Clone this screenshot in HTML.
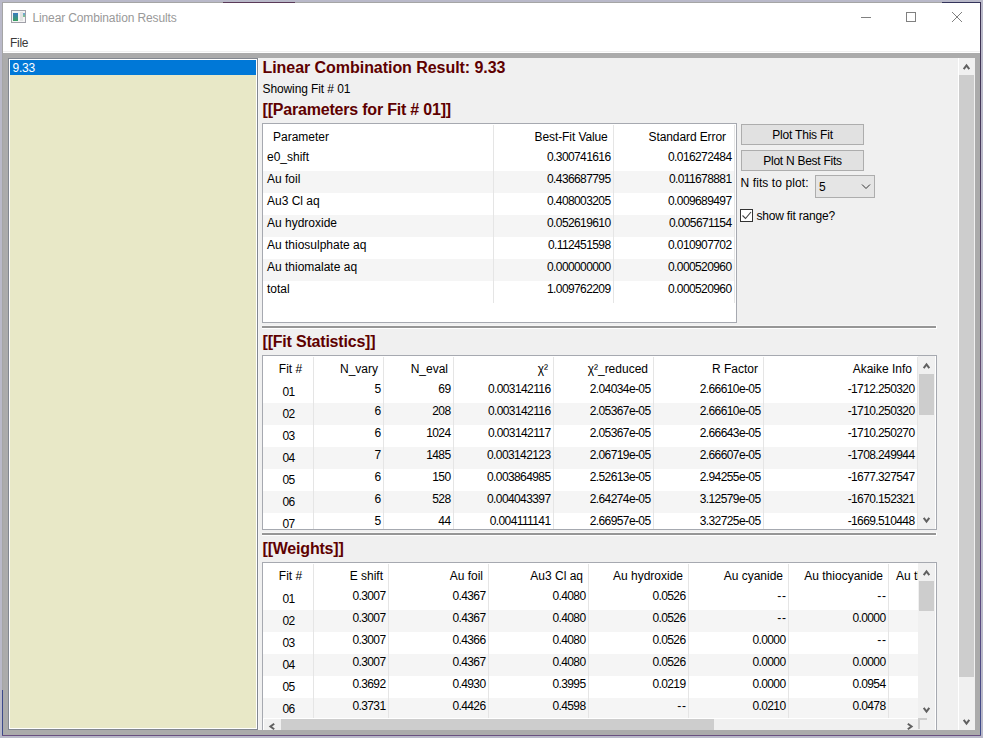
<!DOCTYPE html><html><head><meta charset="utf-8"><title>Linear Combination Results</title><style>
html,body{margin:0;padding:0}
body{width:983px;height:738px;overflow:hidden;position:relative;background:#b9b9c9;font-family:"Liberation Sans", sans-serif}
.t{position:absolute;white-space:nowrap;line-height:16px;height:16px;font-family:"Liberation Sans",sans-serif}
div{box-sizing:border-box}
svg{position:absolute}
</style></head><body>
<div style="position:absolute;left:2px;top:2px;width:979px;height:734px;background:#fff"></div>
<div style="position:absolute;left:2px;top:2px;width:978px;height:1px;background:#a5a5a5"></div>
<div style="position:absolute;left:942px;top:2px;width:39px;height:1px;background:#34345a"></div>
<div style="position:absolute;left:223px;top:2px;width:72px;height:1px;background:#5a3a58"></div>
<div style="position:absolute;left:2px;top:2px;width:1px;height:734px;background:#a5a5a5"></div>
<div style="position:absolute;left:2px;top:690px;width:1px;height:46px;background:#3c4a8a"></div>
<div style="position:absolute;left:980px;top:2px;width:1px;height:734px;background:linear-gradient(#3a3050,#46385a 15%,#5e4a6c 45%,#6a4a78 60%,#5a4a80 85%,#3c4a8a)"></div>
<div style="position:absolute;left:2px;top:735px;width:979px;height:1px;background:#6a5080"></div>
<div style="position:absolute;left:11px;top:10px;width:15px;height:13px;border:1px solid #a0a0a8;background:#f4f4f4"></div>
<div style="position:absolute;left:13px;top:13px;width:5px;height:8px;background:linear-gradient(#3a7ac0,#3aa060)"></div>
<div style="position:absolute;left:20px;top:12px;width:3px;height:9px;background:#e2e2e2"></div>
<div style="position:absolute;left:23px;top:13px;width:2px;height:4px;background:linear-gradient(#6aa0e0,#80c880)"></div>
<div class="t" style="left:32.5px;top:9.84px;font-size:12px;font-weight:normal;color:#999999;letter-spacing:-0.13px;">Linear Combination Results</div>
<div style="position:absolute;left:861px;top:17px;width:10px;height:1px;background:#808080"></div>
<div style="position:absolute;left:906px;top:12px;width:10px;height:10px;border:1px solid #808080"></div>
<svg style="left:0;top:0;overflow:visible" width="1" height="1"><path d="M952,12 L962,22 M962,12 L952,22" stroke="#808080" stroke-width="1"/></svg>
<div class="t" style="left:10px;top:34.84px;font-size:12px;font-weight:normal;color:#3a3a3a;letter-spacing:-0.3px;">File</div>
<div style="position:absolute;left:3px;top:51px;width:977px;height:1px;background:#f0f0f0"></div>
<div style="position:absolute;left:3px;top:53px;width:977px;height:682px;background:#ababab"></div>
<div style="position:absolute;left:8px;top:58px;width:250px;height:672px;background:#e8e8c7;border:1px solid #828790;box-shadow:inset 0 0 0 1px #fff"></div>
<div style="position:absolute;left:10px;top:60px;width:246px;height:15px;background:#0078d7"></div>
<div class="t" style="left:12.5px;top:59.84px;font-size:12px;font-weight:normal;color:#fff;letter-spacing:-0.2px;">9.33</div>
<div style="position:absolute;left:258px;top:58px;width:700px;height:672px;background:#f0f0f0"></div>
<div style="position:absolute;left:958px;top:58px;width:1px;height:672px;background:#fff"></div>
<div style="position:absolute;left:258px;top:58px;width:1px;height:672px;background:#f6f6f6"></div>
<div style="position:absolute;left:959px;top:58px;width:16px;height:672px;background:#f0f0f0"></div>
<div style="position:absolute;left:959px;top:75px;width:15px;height:602px;background:#cdcdcd"></div>
<svg style="position:absolute;left:0;top:0;overflow:visible" width="1" height="1"><path d="M963.7,69.2 L966.5,65.41 L969.3,69.2" fill="none" stroke="#606060" stroke-width="2" stroke-linejoin="miter" stroke-linecap="butt"/></svg>
<svg style="position:absolute;left:0;top:0;overflow:visible" width="1" height="1"><path d="M963.7,719.8 L966.5,723.59 L969.3,719.8" fill="none" stroke="#606060" stroke-width="2" stroke-linejoin="miter" stroke-linecap="butt"/></svg>
<div class="t" style="left:262.5px;top:60.46px;font-size:16px;font-weight:bold;color:#5e0000;letter-spacing:-0.05px;">Linear Combination Result: 9.33</div>
<div class="t" style="left:262.5px;top:80.84px;font-size:12px;font-weight:normal;color:#000;letter-spacing:-0.1px;">Showing Fit # 01</div>
<div class="t" style="left:262.5px;top:102.46px;font-size:16px;font-weight:bold;color:#5e0000;letter-spacing:-0.2px;">[[Parameters for Fit # 01]]</div>
<div style="position:absolute;left:262px;top:123px;width:475px;height:200px;background:#fff;border:1px solid #a6a9b0"></div>
<div style="position:absolute;left:263px;top:171px;width:472px;height:22px;background:#f5f5f5"></div>
<div style="position:absolute;left:263px;top:215px;width:472px;height:22px;background:#f5f5f5"></div>
<div style="position:absolute;left:263px;top:259px;width:472px;height:22px;background:#f5f5f5"></div>
<div style="position:absolute;left:493px;top:125px;width:1px;height:178px;background:#e5e5e5"></div>
<div style="position:absolute;left:613px;top:125px;width:1px;height:178px;background:#e5e5e5"></div>
<div style="position:absolute;left:734px;top:125px;width:1px;height:178px;background:#e5e5e5"></div>
<div class="t" style="left:273px;top:128.84px;font-size:12px;font-weight:normal;color:#000;letter-spacing:0px;">Parameter</div>
<div class="t" style="left:207.70000000000005px;width:400px;text-align:right;top:128.84px;font-size:12px;font-weight:normal;color:#000;letter-spacing:-0.1px;">Best-Fit Value</div>
<div class="t" style="left:325.9px;width:400px;text-align:right;top:128.84px;font-size:12px;font-weight:normal;color:#000;letter-spacing:-0.1px;">Standard Error</div>
<div class="t" style="left:267px;top:148.84px;font-size:12px;font-weight:normal;color:#000;letter-spacing:0px;">e0_shift</div>
<div class="t" style="left:210.5px;width:400px;text-align:right;top:148.84px;font-size:12px;font-weight:normal;color:#000;letter-spacing:-0.6px;">0.300741616</div>
<div class="t" style="left:331.5px;width:400px;text-align:right;top:148.84px;font-size:12px;font-weight:normal;color:#000;letter-spacing:-0.6px;">0.016272484</div>
<div class="t" style="left:267px;top:170.84px;font-size:12px;font-weight:normal;color:#000;letter-spacing:0px;">Au foil</div>
<div class="t" style="left:210.5px;width:400px;text-align:right;top:170.84px;font-size:12px;font-weight:normal;color:#000;letter-spacing:-0.6px;">0.436687795</div>
<div class="t" style="left:331.5px;width:400px;text-align:right;top:170.84px;font-size:12px;font-weight:normal;color:#000;letter-spacing:-0.6px;">0.011678881</div>
<div class="t" style="left:267px;top:192.84px;font-size:12px;font-weight:normal;color:#000;letter-spacing:0px;">Au3 Cl aq</div>
<div class="t" style="left:210.5px;width:400px;text-align:right;top:192.84px;font-size:12px;font-weight:normal;color:#000;letter-spacing:-0.6px;">0.408003205</div>
<div class="t" style="left:331.5px;width:400px;text-align:right;top:192.84px;font-size:12px;font-weight:normal;color:#000;letter-spacing:-0.6px;">0.009689497</div>
<div class="t" style="left:267px;top:214.84px;font-size:12px;font-weight:normal;color:#000;letter-spacing:0px;">Au hydroxide</div>
<div class="t" style="left:210.5px;width:400px;text-align:right;top:214.84px;font-size:12px;font-weight:normal;color:#000;letter-spacing:-0.6px;">0.052619610</div>
<div class="t" style="left:331.5px;width:400px;text-align:right;top:214.84px;font-size:12px;font-weight:normal;color:#000;letter-spacing:-0.6px;">0.005671154</div>
<div class="t" style="left:267px;top:236.84px;font-size:12px;font-weight:normal;color:#000;letter-spacing:0px;">Au thiosulphate aq</div>
<div class="t" style="left:210.5px;width:400px;text-align:right;top:236.84px;font-size:12px;font-weight:normal;color:#000;letter-spacing:-0.6px;">0.112451598</div>
<div class="t" style="left:331.5px;width:400px;text-align:right;top:236.84px;font-size:12px;font-weight:normal;color:#000;letter-spacing:-0.6px;">0.010907702</div>
<div class="t" style="left:267px;top:258.84px;font-size:12px;font-weight:normal;color:#000;letter-spacing:0px;">Au thiomalate aq</div>
<div class="t" style="left:210.5px;width:400px;text-align:right;top:258.84px;font-size:12px;font-weight:normal;color:#000;letter-spacing:-0.6px;">0.000000000</div>
<div class="t" style="left:331.5px;width:400px;text-align:right;top:258.84px;font-size:12px;font-weight:normal;color:#000;letter-spacing:-0.6px;">0.000520960</div>
<div class="t" style="left:267px;top:280.84px;font-size:12px;font-weight:normal;color:#000;letter-spacing:0px;">total</div>
<div class="t" style="left:210.5px;width:400px;text-align:right;top:280.84px;font-size:12px;font-weight:normal;color:#000;letter-spacing:-0.6px;">1.009762209</div>
<div class="t" style="left:331.5px;width:400px;text-align:right;top:280.84px;font-size:12px;font-weight:normal;color:#000;letter-spacing:-0.6px;">0.000520960</div>
<div style="position:absolute;left:741px;top:124px;width:123px;height:21px;background:#e1e1e1;border:1px solid #adadad"></div>
<div class="t" style="left:702.5px;width:200px;text-align:center;top:126.84px;font-size:12px;font-weight:normal;color:#000;letter-spacing:-0.2px;">Plot This Fit</div>
<div style="position:absolute;left:741px;top:150px;width:123px;height:21px;background:#e1e1e1;border:1px solid #adadad"></div>
<div class="t" style="left:702.5px;width:200px;text-align:center;top:152.84px;font-size:12px;font-weight:normal;color:#000;letter-spacing:-0.27px;">Plot N Best Fits</div>
<div class="t" style="left:740.5px;top:174.84px;font-size:12px;font-weight:normal;color:#000;letter-spacing:0.1px;">N fits to plot:</div>
<div style="position:absolute;left:815px;top:175px;width:60px;height:23px;background:#e5e5e5;border:1px solid #adadad"></div>
<div class="t" style="left:819px;top:179.34px;font-size:12px;font-weight:normal;color:#000;letter-spacing:-0.6px;">5</div>
<svg style="left:0;top:0;overflow:visible" width="1" height="1"><path d="M862,184.5 L866,188.5 L870,184.5" fill="none" stroke="#333" stroke-width="1"/></svg>
<div style="position:absolute;left:740px;top:209px;width:13px;height:13px;background:#fff;border:1px solid #333"></div>
<svg style="left:0;top:0;overflow:visible" width="1" height="1"><path d="M742.5,215.5 L745.5,218.5 L751,212" fill="none" stroke="#404040" stroke-width="1.1"/></svg>
<div class="t" style="left:756.5px;top:208.34px;font-size:12px;font-weight:normal;color:#000;letter-spacing:-0.2px;">show fit range?</div>
<div style="position:absolute;left:262px;top:325px;width:675px;height:1px;background:#f7f7f7"></div>
<div style="position:absolute;left:262px;top:328px;width:675px;height:1px;background:#fff"></div>
<div style="position:absolute;left:936px;top:326px;width:1px;height:2px;background:#fff"></div>
<div style="position:absolute;left:262px;top:326px;width:674px;height:2px;background:#969696"></div>
<div class="t" style="left:262.5px;top:334.46px;font-size:16px;font-weight:bold;color:#5e0000;letter-spacing:-0.2px;">[[Fit Statistics]]</div>
<div style="position:absolute;left:262px;top:355px;width:675px;height:175px;background:#fff;border:1px solid #a6a9b0"></div>
<div style="position:absolute;left:263px;top:403px;width:655px;height:22px;background:#f5f5f5"></div>
<div style="position:absolute;left:263px;top:447px;width:655px;height:22px;background:#f5f5f5"></div>
<div style="position:absolute;left:263px;top:491px;width:655px;height:22px;background:#f5f5f5"></div>
<div style="position:absolute;left:313px;top:357px;width:1px;height:172px;background:#e5e5e5"></div>
<div style="position:absolute;left:383px;top:357px;width:1px;height:172px;background:#e5e5e5"></div>
<div style="position:absolute;left:453px;top:357px;width:1px;height:172px;background:#e5e5e5"></div>
<div style="position:absolute;left:553px;top:357px;width:1px;height:172px;background:#e5e5e5"></div>
<div style="position:absolute;left:653px;top:357px;width:1px;height:172px;background:#e5e5e5"></div>
<div style="position:absolute;left:763px;top:357px;width:1px;height:172px;background:#e5e5e5"></div>
<div style="position:absolute;left:917px;top:357px;width:1px;height:172px;background:#e5e5e5"></div>
<div style="position:absolute;left:918px;top:356px;width:17px;height:173px;background:#f0f0f0"></div>
<div style="position:absolute;left:919px;top:374px;width:15px;height:41px;background:#cdcdcd"></div>
<svg style="position:absolute;left:0;top:0;overflow:visible" width="1" height="1"><path d="M923.7,368.2 L926.5,364.41 L929.3,368.2" fill="none" stroke="#606060" stroke-width="2" stroke-linejoin="miter" stroke-linecap="butt"/></svg>
<svg style="position:absolute;left:0;top:0;overflow:visible" width="1" height="1"><path d="M923.7,517.8 L926.5,521.59 L929.3,517.8" fill="none" stroke="#606060" stroke-width="2" stroke-linejoin="miter" stroke-linecap="butt"/></svg>
<div class="t" style="left:190.5px;width:200px;text-align:center;top:360.84px;font-size:12px;font-weight:normal;color:#000;letter-spacing:0px;">Fit #</div>
<div class="t" style="left:-22px;width:400px;text-align:right;top:360.84px;font-size:12px;font-weight:normal;color:#000;letter-spacing:0px;">N_vary</div>
<div class="t" style="left:48px;width:400px;text-align:right;top:360.84px;font-size:12px;font-weight:normal;color:#000;letter-spacing:0px;">N_eval</div>
<div class="t" style="left:148px;width:400px;text-align:right;top:360.84px;font-size:12px;font-weight:normal;color:#000;letter-spacing:0px;">χ²</div>
<div class="t" style="left:248px;width:400px;text-align:right;top:360.84px;font-size:12px;font-weight:normal;color:#000;letter-spacing:0px;">χ²_reduced</div>
<div class="t" style="left:358px;width:400px;text-align:right;top:360.84px;font-size:12px;font-weight:normal;color:#000;letter-spacing:0px;">R Factor</div>
<div class="t" style="left:512px;width:400px;text-align:right;top:360.84px;font-size:12px;font-weight:normal;color:#000;letter-spacing:0px;">Akaike Info</div>
<div class="t" style="left:188.5px;width:200px;text-align:center;top:383.84px;font-size:12px;font-weight:normal;color:#000;letter-spacing:-0.6px;">01</div>
<div class="t" style="left:-19.5px;width:400px;text-align:right;top:380.84px;font-size:12px;font-weight:normal;color:#000;letter-spacing:-0.6px;">5</div>
<div class="t" style="left:50.5px;width:400px;text-align:right;top:380.84px;font-size:12px;font-weight:normal;color:#000;letter-spacing:-0.6px;">69</div>
<div class="t" style="left:150.5px;width:400px;text-align:right;top:380.84px;font-size:12px;font-weight:normal;color:#000;letter-spacing:-0.6px;">0.003142116</div>
<div class="t" style="left:250.5px;width:400px;text-align:right;top:380.84px;font-size:12px;font-weight:normal;color:#000;letter-spacing:-0.6px;">2.04034e-05</div>
<div class="t" style="left:360.5px;width:400px;text-align:right;top:380.84px;font-size:12px;font-weight:normal;color:#000;letter-spacing:-0.6px;">2.66610e-05</div>
<div class="t" style="left:514.5px;width:400px;text-align:right;top:380.84px;font-size:12px;font-weight:normal;color:#000;letter-spacing:-0.6px;">-1712.250320</div>
<div class="t" style="left:188.5px;width:200px;text-align:center;top:405.84px;font-size:12px;font-weight:normal;color:#000;letter-spacing:-0.6px;">02</div>
<div class="t" style="left:-19.5px;width:400px;text-align:right;top:402.84px;font-size:12px;font-weight:normal;color:#000;letter-spacing:-0.6px;">6</div>
<div class="t" style="left:50.5px;width:400px;text-align:right;top:402.84px;font-size:12px;font-weight:normal;color:#000;letter-spacing:-0.6px;">208</div>
<div class="t" style="left:150.5px;width:400px;text-align:right;top:402.84px;font-size:12px;font-weight:normal;color:#000;letter-spacing:-0.6px;">0.003142116</div>
<div class="t" style="left:250.5px;width:400px;text-align:right;top:402.84px;font-size:12px;font-weight:normal;color:#000;letter-spacing:-0.6px;">2.05367e-05</div>
<div class="t" style="left:360.5px;width:400px;text-align:right;top:402.84px;font-size:12px;font-weight:normal;color:#000;letter-spacing:-0.6px;">2.66610e-05</div>
<div class="t" style="left:514.5px;width:400px;text-align:right;top:402.84px;font-size:12px;font-weight:normal;color:#000;letter-spacing:-0.6px;">-1710.250320</div>
<div class="t" style="left:188.5px;width:200px;text-align:center;top:427.84px;font-size:12px;font-weight:normal;color:#000;letter-spacing:-0.6px;">03</div>
<div class="t" style="left:-19.5px;width:400px;text-align:right;top:424.84px;font-size:12px;font-weight:normal;color:#000;letter-spacing:-0.6px;">6</div>
<div class="t" style="left:50.5px;width:400px;text-align:right;top:424.84px;font-size:12px;font-weight:normal;color:#000;letter-spacing:-0.6px;">1024</div>
<div class="t" style="left:150.5px;width:400px;text-align:right;top:424.84px;font-size:12px;font-weight:normal;color:#000;letter-spacing:-0.6px;">0.003142117</div>
<div class="t" style="left:250.5px;width:400px;text-align:right;top:424.84px;font-size:12px;font-weight:normal;color:#000;letter-spacing:-0.6px;">2.05367e-05</div>
<div class="t" style="left:360.5px;width:400px;text-align:right;top:424.84px;font-size:12px;font-weight:normal;color:#000;letter-spacing:-0.6px;">2.66643e-05</div>
<div class="t" style="left:514.5px;width:400px;text-align:right;top:424.84px;font-size:12px;font-weight:normal;color:#000;letter-spacing:-0.6px;">-1710.250270</div>
<div class="t" style="left:188.5px;width:200px;text-align:center;top:449.84px;font-size:12px;font-weight:normal;color:#000;letter-spacing:-0.6px;">04</div>
<div class="t" style="left:-19.5px;width:400px;text-align:right;top:446.84px;font-size:12px;font-weight:normal;color:#000;letter-spacing:-0.6px;">7</div>
<div class="t" style="left:50.5px;width:400px;text-align:right;top:446.84px;font-size:12px;font-weight:normal;color:#000;letter-spacing:-0.6px;">1485</div>
<div class="t" style="left:150.5px;width:400px;text-align:right;top:446.84px;font-size:12px;font-weight:normal;color:#000;letter-spacing:-0.6px;">0.003142123</div>
<div class="t" style="left:250.5px;width:400px;text-align:right;top:446.84px;font-size:12px;font-weight:normal;color:#000;letter-spacing:-0.6px;">2.06719e-05</div>
<div class="t" style="left:360.5px;width:400px;text-align:right;top:446.84px;font-size:12px;font-weight:normal;color:#000;letter-spacing:-0.6px;">2.66607e-05</div>
<div class="t" style="left:514.5px;width:400px;text-align:right;top:446.84px;font-size:12px;font-weight:normal;color:#000;letter-spacing:-0.6px;">-1708.249944</div>
<div class="t" style="left:188.5px;width:200px;text-align:center;top:471.84px;font-size:12px;font-weight:normal;color:#000;letter-spacing:-0.6px;">05</div>
<div class="t" style="left:-19.5px;width:400px;text-align:right;top:468.84px;font-size:12px;font-weight:normal;color:#000;letter-spacing:-0.6px;">6</div>
<div class="t" style="left:50.5px;width:400px;text-align:right;top:468.84px;font-size:12px;font-weight:normal;color:#000;letter-spacing:-0.6px;">150</div>
<div class="t" style="left:150.5px;width:400px;text-align:right;top:468.84px;font-size:12px;font-weight:normal;color:#000;letter-spacing:-0.6px;">0.003864985</div>
<div class="t" style="left:250.5px;width:400px;text-align:right;top:468.84px;font-size:12px;font-weight:normal;color:#000;letter-spacing:-0.6px;">2.52613e-05</div>
<div class="t" style="left:360.5px;width:400px;text-align:right;top:468.84px;font-size:12px;font-weight:normal;color:#000;letter-spacing:-0.6px;">2.94255e-05</div>
<div class="t" style="left:514.5px;width:400px;text-align:right;top:468.84px;font-size:12px;font-weight:normal;color:#000;letter-spacing:-0.6px;">-1677.327547</div>
<div class="t" style="left:188.5px;width:200px;text-align:center;top:493.84px;font-size:12px;font-weight:normal;color:#000;letter-spacing:-0.6px;">06</div>
<div class="t" style="left:-19.5px;width:400px;text-align:right;top:490.84px;font-size:12px;font-weight:normal;color:#000;letter-spacing:-0.6px;">6</div>
<div class="t" style="left:50.5px;width:400px;text-align:right;top:490.84px;font-size:12px;font-weight:normal;color:#000;letter-spacing:-0.6px;">528</div>
<div class="t" style="left:150.5px;width:400px;text-align:right;top:490.84px;font-size:12px;font-weight:normal;color:#000;letter-spacing:-0.6px;">0.004043397</div>
<div class="t" style="left:250.5px;width:400px;text-align:right;top:490.84px;font-size:12px;font-weight:normal;color:#000;letter-spacing:-0.6px;">2.64274e-05</div>
<div class="t" style="left:360.5px;width:400px;text-align:right;top:490.84px;font-size:12px;font-weight:normal;color:#000;letter-spacing:-0.6px;">3.12579e-05</div>
<div class="t" style="left:514.5px;width:400px;text-align:right;top:490.84px;font-size:12px;font-weight:normal;color:#000;letter-spacing:-0.6px;">-1670.152321</div>
<div class="t" style="left:188.5px;width:200px;text-align:center;top:515.84px;font-size:12px;font-weight:normal;color:#000;letter-spacing:-0.6px;">07</div>
<div class="t" style="left:-19.5px;width:400px;text-align:right;top:512.84px;font-size:12px;font-weight:normal;color:#000;letter-spacing:-0.6px;">5</div>
<div class="t" style="left:50.5px;width:400px;text-align:right;top:512.84px;font-size:12px;font-weight:normal;color:#000;letter-spacing:-0.6px;">44</div>
<div class="t" style="left:150.5px;width:400px;text-align:right;top:512.84px;font-size:12px;font-weight:normal;color:#000;letter-spacing:-0.6px;">0.004111141</div>
<div class="t" style="left:250.5px;width:400px;text-align:right;top:512.84px;font-size:12px;font-weight:normal;color:#000;letter-spacing:-0.6px;">2.66957e-05</div>
<div class="t" style="left:360.5px;width:400px;text-align:right;top:512.84px;font-size:12px;font-weight:normal;color:#000;letter-spacing:-0.6px;">3.32725e-05</div>
<div class="t" style="left:514.5px;width:400px;text-align:right;top:512.84px;font-size:12px;font-weight:normal;color:#000;letter-spacing:-0.6px;">-1669.510448</div>
<div style="position:absolute;left:262px;top:532px;width:675px;height:1px;background:#f7f7f7"></div>
<div style="position:absolute;left:262px;top:535px;width:675px;height:1px;background:#fff"></div>
<div style="position:absolute;left:936px;top:533px;width:1px;height:2px;background:#fff"></div>
<div style="position:absolute;left:262px;top:533px;width:674px;height:2px;background:#969696"></div>
<div class="t" style="left:262.5px;top:541.46px;font-size:16px;font-weight:bold;color:#5e0000;letter-spacing:-0.2px;">[[Weights]]</div>
<div style="position:absolute;left:262px;top:562px;width:675px;height:168px;background:#fff;border:1px solid #a6a9b0;border-bottom:none"></div>
<div style="position:absolute;left:263px;top:610px;width:655px;height:22px;background:#f5f5f5"></div>
<div style="position:absolute;left:263px;top:654px;width:655px;height:22px;background:#f5f5f5"></div>
<div style="position:absolute;left:263px;top:698px;width:655px;height:20px;background:#f5f5f5"></div>
<div style="position:absolute;left:313px;top:564px;width:1px;height:154px;background:#e5e5e5"></div>
<div style="position:absolute;left:388px;top:564px;width:1px;height:154px;background:#e5e5e5"></div>
<div style="position:absolute;left:488px;top:564px;width:1px;height:154px;background:#e5e5e5"></div>
<div style="position:absolute;left:588px;top:564px;width:1px;height:154px;background:#e5e5e5"></div>
<div style="position:absolute;left:688px;top:564px;width:1px;height:154px;background:#e5e5e5"></div>
<div style="position:absolute;left:788px;top:564px;width:1px;height:154px;background:#e5e5e5"></div>
<div style="position:absolute;left:888px;top:564px;width:1px;height:154px;background:#e5e5e5"></div>
<div class="t" style="left:190.5px;width:200px;text-align:center;top:567.84px;font-size:12px;font-weight:normal;color:#000;letter-spacing:0px;">Fit #</div>
<div class="t" style="left:-17px;width:400px;text-align:right;top:567.84px;font-size:12px;font-weight:normal;color:#000;letter-spacing:0px;">E shift</div>
<div class="t" style="left:83px;width:400px;text-align:right;top:567.84px;font-size:12px;font-weight:normal;color:#000;letter-spacing:0px;">Au foil</div>
<div class="t" style="left:183px;width:400px;text-align:right;top:567.84px;font-size:12px;font-weight:normal;color:#000;letter-spacing:0px;">Au3 Cl aq</div>
<div class="t" style="left:283px;width:400px;text-align:right;top:567.84px;font-size:12px;font-weight:normal;color:#000;letter-spacing:0px;">Au hydroxide</div>
<div class="t" style="left:383px;width:400px;text-align:right;top:567.84px;font-size:12px;font-weight:normal;color:#000;letter-spacing:0px;">Au cyanide</div>
<div class="t" style="left:483px;width:400px;text-align:right;top:567.84px;font-size:12px;font-weight:normal;color:#000;letter-spacing:0px;">Au thiocyanide</div>
<div style="position:absolute;left:889px;top:563px;width:29px;height:20px;overflow:hidden">
<div class="t" style="left:7px;top:4.97px;font-size:12px;letter-spacing:0px">Au thiomalate aq</div>
</div>
<div class="t" style="left:188.5px;width:200px;text-align:center;top:590.84px;font-size:12px;font-weight:normal;color:#000;letter-spacing:-0.6px;">01</div>
<div class="t" style="left:-14.5px;width:400px;text-align:right;top:587.84px;font-size:12px;font-weight:normal;color:#000;letter-spacing:-0.6px;">0.3007</div>
<div class="t" style="left:85.5px;width:400px;text-align:right;top:587.84px;font-size:12px;font-weight:normal;color:#000;letter-spacing:-0.6px;">0.4367</div>
<div class="t" style="left:185.5px;width:400px;text-align:right;top:587.84px;font-size:12px;font-weight:normal;color:#000;letter-spacing:-0.6px;">0.4080</div>
<div class="t" style="left:285.5px;width:400px;text-align:right;top:587.84px;font-size:12px;font-weight:normal;color:#000;letter-spacing:-0.6px;">0.0526</div>
<div class="t" style="left:386.5px;width:400px;text-align:right;top:587.84px;font-size:12px;font-weight:normal;color:#000;letter-spacing:0.6px;">--</div>
<div class="t" style="left:486.5px;width:400px;text-align:right;top:587.84px;font-size:12px;font-weight:normal;color:#000;letter-spacing:0.6px;">--</div>
<div class="t" style="left:188.5px;width:200px;text-align:center;top:612.84px;font-size:12px;font-weight:normal;color:#000;letter-spacing:-0.6px;">02</div>
<div class="t" style="left:-14.5px;width:400px;text-align:right;top:609.84px;font-size:12px;font-weight:normal;color:#000;letter-spacing:-0.6px;">0.3007</div>
<div class="t" style="left:85.5px;width:400px;text-align:right;top:609.84px;font-size:12px;font-weight:normal;color:#000;letter-spacing:-0.6px;">0.4367</div>
<div class="t" style="left:185.5px;width:400px;text-align:right;top:609.84px;font-size:12px;font-weight:normal;color:#000;letter-spacing:-0.6px;">0.4080</div>
<div class="t" style="left:285.5px;width:400px;text-align:right;top:609.84px;font-size:12px;font-weight:normal;color:#000;letter-spacing:-0.6px;">0.0526</div>
<div class="t" style="left:386.5px;width:400px;text-align:right;top:609.84px;font-size:12px;font-weight:normal;color:#000;letter-spacing:0.6px;">--</div>
<div class="t" style="left:485.5px;width:400px;text-align:right;top:609.84px;font-size:12px;font-weight:normal;color:#000;letter-spacing:-0.6px;">0.0000</div>
<div class="t" style="left:188.5px;width:200px;text-align:center;top:634.84px;font-size:12px;font-weight:normal;color:#000;letter-spacing:-0.6px;">03</div>
<div class="t" style="left:-14.5px;width:400px;text-align:right;top:631.84px;font-size:12px;font-weight:normal;color:#000;letter-spacing:-0.6px;">0.3007</div>
<div class="t" style="left:85.5px;width:400px;text-align:right;top:631.84px;font-size:12px;font-weight:normal;color:#000;letter-spacing:-0.6px;">0.4366</div>
<div class="t" style="left:185.5px;width:400px;text-align:right;top:631.84px;font-size:12px;font-weight:normal;color:#000;letter-spacing:-0.6px;">0.4080</div>
<div class="t" style="left:285.5px;width:400px;text-align:right;top:631.84px;font-size:12px;font-weight:normal;color:#000;letter-spacing:-0.6px;">0.0526</div>
<div class="t" style="left:385.5px;width:400px;text-align:right;top:631.84px;font-size:12px;font-weight:normal;color:#000;letter-spacing:-0.6px;">0.0000</div>
<div class="t" style="left:486.5px;width:400px;text-align:right;top:631.84px;font-size:12px;font-weight:normal;color:#000;letter-spacing:0.6px;">--</div>
<div class="t" style="left:188.5px;width:200px;text-align:center;top:656.84px;font-size:12px;font-weight:normal;color:#000;letter-spacing:-0.6px;">04</div>
<div class="t" style="left:-14.5px;width:400px;text-align:right;top:653.84px;font-size:12px;font-weight:normal;color:#000;letter-spacing:-0.6px;">0.3007</div>
<div class="t" style="left:85.5px;width:400px;text-align:right;top:653.84px;font-size:12px;font-weight:normal;color:#000;letter-spacing:-0.6px;">0.4367</div>
<div class="t" style="left:185.5px;width:400px;text-align:right;top:653.84px;font-size:12px;font-weight:normal;color:#000;letter-spacing:-0.6px;">0.4080</div>
<div class="t" style="left:285.5px;width:400px;text-align:right;top:653.84px;font-size:12px;font-weight:normal;color:#000;letter-spacing:-0.6px;">0.0526</div>
<div class="t" style="left:385.5px;width:400px;text-align:right;top:653.84px;font-size:12px;font-weight:normal;color:#000;letter-spacing:-0.6px;">0.0000</div>
<div class="t" style="left:485.5px;width:400px;text-align:right;top:653.84px;font-size:12px;font-weight:normal;color:#000;letter-spacing:-0.6px;">0.0000</div>
<div class="t" style="left:188.5px;width:200px;text-align:center;top:678.84px;font-size:12px;font-weight:normal;color:#000;letter-spacing:-0.6px;">05</div>
<div class="t" style="left:-14.5px;width:400px;text-align:right;top:675.84px;font-size:12px;font-weight:normal;color:#000;letter-spacing:-0.6px;">0.3692</div>
<div class="t" style="left:85.5px;width:400px;text-align:right;top:675.84px;font-size:12px;font-weight:normal;color:#000;letter-spacing:-0.6px;">0.4930</div>
<div class="t" style="left:185.5px;width:400px;text-align:right;top:675.84px;font-size:12px;font-weight:normal;color:#000;letter-spacing:-0.6px;">0.3995</div>
<div class="t" style="left:285.5px;width:400px;text-align:right;top:675.84px;font-size:12px;font-weight:normal;color:#000;letter-spacing:-0.6px;">0.0219</div>
<div class="t" style="left:385.5px;width:400px;text-align:right;top:675.84px;font-size:12px;font-weight:normal;color:#000;letter-spacing:-0.6px;">0.0000</div>
<div class="t" style="left:485.5px;width:400px;text-align:right;top:675.84px;font-size:12px;font-weight:normal;color:#000;letter-spacing:-0.6px;">0.0954</div>
<div class="t" style="left:188.5px;width:200px;text-align:center;top:700.84px;font-size:12px;font-weight:normal;color:#000;letter-spacing:-0.6px;">06</div>
<div class="t" style="left:-14.5px;width:400px;text-align:right;top:697.84px;font-size:12px;font-weight:normal;color:#000;letter-spacing:-0.6px;">0.3731</div>
<div class="t" style="left:85.5px;width:400px;text-align:right;top:697.84px;font-size:12px;font-weight:normal;color:#000;letter-spacing:-0.6px;">0.4426</div>
<div class="t" style="left:185.5px;width:400px;text-align:right;top:697.84px;font-size:12px;font-weight:normal;color:#000;letter-spacing:-0.6px;">0.4598</div>
<div class="t" style="left:286.5px;width:400px;text-align:right;top:697.84px;font-size:12px;font-weight:normal;color:#000;letter-spacing:0.6px;">--</div>
<div class="t" style="left:385.5px;width:400px;text-align:right;top:697.84px;font-size:12px;font-weight:normal;color:#000;letter-spacing:-0.6px;">0.0210</div>
<div class="t" style="left:485.5px;width:400px;text-align:right;top:697.84px;font-size:12px;font-weight:normal;color:#000;letter-spacing:-0.6px;">0.0478</div>
<div style="position:absolute;left:918px;top:563px;width:17px;height:156px;background:#f0f0f0"></div>
<div style="position:absolute;left:919px;top:581px;width:15px;height:30px;background:#cdcdcd"></div>
<svg style="position:absolute;left:0;top:0;overflow:visible" width="1" height="1"><path d="M923.7,575.2 L926.5,571.41 L929.3,575.2" fill="none" stroke="#606060" stroke-width="2" stroke-linejoin="miter" stroke-linecap="butt"/></svg>
<svg style="position:absolute;left:0;top:0;overflow:visible" width="1" height="1"><path d="M923.7,707.8 L926.5,711.59 L929.3,707.8" fill="none" stroke="#606060" stroke-width="2" stroke-linejoin="miter" stroke-linecap="butt"/></svg>
<div style="position:absolute;left:263px;top:718px;width:655px;height:1px;background:#fff"></div>
<div style="position:absolute;left:264px;top:719px;width:654px;height:11px;background:#f0f0f0"></div>
<div style="position:absolute;left:281px;top:719px;width:433px;height:11px;background:#cdcdcd"></div>
<svg style="position:absolute;left:0;top:0;overflow:visible" width="1" height="1"><path d="M274.2,723.7 L270.41,726.5 L274.2,729.3" fill="none" stroke="#606060" stroke-width="2" stroke-linejoin="miter" stroke-linecap="butt"/></svg>
<svg style="position:absolute;left:0;top:0;overflow:visible" width="1" height="1"><path d="M907.8,723.7 L911.59,726.5 L907.8,729.3" fill="none" stroke="#606060" stroke-width="2" stroke-linejoin="miter" stroke-linecap="butt"/></svg>
<div style="position:absolute;left:918px;top:719px;width:17px;height:11px;background:#f0f0f0"></div>
<div style="position:absolute;left:918px;top:718px;width:9px;height:2px;background:#cdcdcd"></div>
<div style="position:absolute;left:918px;top:718px;width:2px;height:11px;background:#cdcdcd"></div>
<div style="position:absolute;left:935px;top:563px;width:1px;height:167px;background:#fff"></div>
<div style="position:absolute;left:3px;top:730px;width:977px;height:5px;background:#ababab"></div>
<div style="position:absolute;left:2px;top:735px;width:979px;height:1px;background:#6a5080"></div>
</body></html>
